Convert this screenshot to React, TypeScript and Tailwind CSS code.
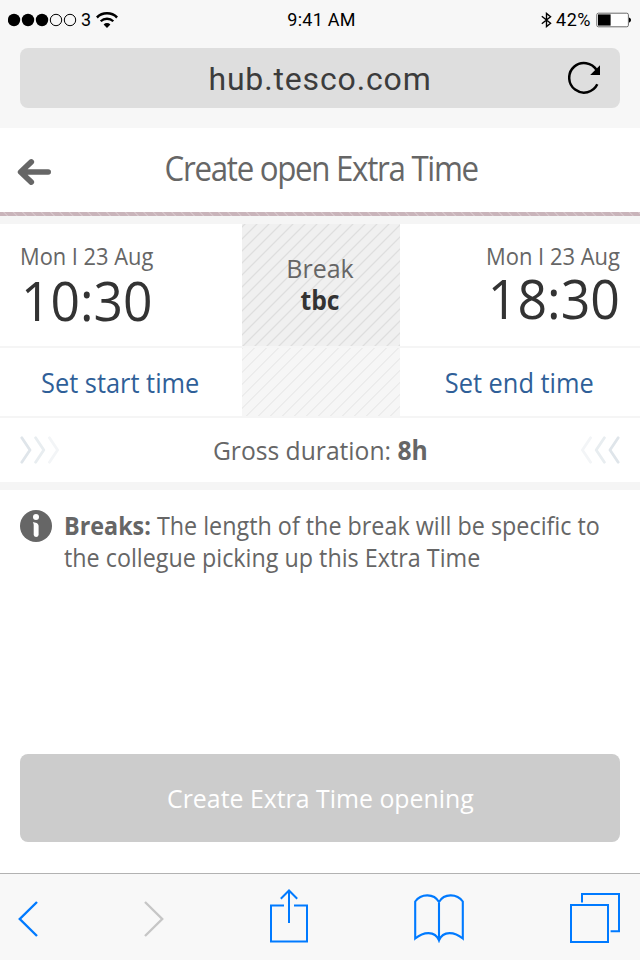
import type { ReactNode } from "react";

function StatusBar() {
  return (
    <div className="flex h-10 items-center justify-between pr-[9px] pl-2 font-['Roboto',sans-serif] text-[18px] leading-10 text-black">
      <div className="flex w-[274px] items-center">
        <svg width="70" height="14" viewBox="0 0 70 14">
          <circle cx="6" cy="7" r="6.2" />
          <circle cx="20" cy="7" r="6.2" />
          <circle cx="34" cy="7" r="6.2" />
          <circle cx="48" cy="7" r="5.7" fill="none" stroke="#000" />
          <circle cx="62" cy="7" r="5.7" fill="none" stroke="#000" />
        </svg>
        <span className="ml-[3px] w-[15px]">3</span>
        <svg width="22" height="16" viewBox="0 0 22 16" fill="none" stroke="#000">
          <path d="M.9 5.5a14.4 14.4 0 0 1 20.2 0" strokeWidth="2.5" />
          <path d="M4.7 9.3a9 9 0 0 1 12.6 0" strokeWidth="2.3" />
          <path d="M11 16 7.6 12.4a4.9 4.9 0 0 1 6.8 0Z" fill="#000" stroke="none" />
        </svg>
      </div>
      <span className="tracking-[0.25px]">9:41 AM</span>
      <div className="flex w-[270px] items-center justify-end">
        <svg width="11" height="16" viewBox="0 0 10 15" fill="none" stroke="#000" strokeWidth="1.3">
          <path d="M.6 4 8.8 10.6 5 13.7V1.3l3.8 3.1L.6 11" />
        </svg>
        <span className="ml-[4px] tracking-[0.5px]">42%</span>
        <svg className="ml-[5px]" width="35" height="16" viewBox="0 0 35 16">
          <rect x="0.8" y="1.2" width="31.6" height="13.6" rx="1.6" fill="#fff" stroke="#6b6b6b" strokeWidth="1" />
          <rect x="2" y="2.4" width="12.6" height="11.2" />
          <path d="M33 5.4c1.3.4 2 1.4 2 2.6s-.7 2.2-2 2.6Z" />
        </svg>
      </div>
    </div>
  );
}

function AddressBar() {
  return (
    <div className="mx-5 mt-2 flex h-[60px] items-center rounded-lg bg-[#dedede]">
      <span className="w-9" />
      <span className="flex-1 pt-[2px] pl-4 text-center font-['Roboto',sans-serif] text-[32px] leading-[60px] tracking-[0.85px] text-[#3c3c3c]">
        hub.tesco.com
      </span>
      <svg className="mr-4" width="36" height="36" viewBox="0 0 36 36">
        <path d="M28.7 10.2A14.8 14.8 0 1 0 29.3 24.3" fill="none" stroke="#000" strokeWidth="2.5" />
        <path d="M32 5.2V15h-9.8Z" />
      </svg>
    </div>
  );
}

function Chevrons({ flip = false }: { flip?: boolean }) {
  return (
    <svg className={flip ? "-scale-x-100" : ""} width="40" height="28" viewBox="0 0 40 28" fill="none" strokeWidth="2.8" strokeLinecap="round" strokeLinejoin="round">
      <path d="M1.8 1.8 10 14 1.8 26.2" stroke="#dfe5ea" />
      <path d="M15.6 1.8 23.8 14 15.6 26.2" stroke="#e8edf0" />
      <path d="M29.4 1.8 37.6 14 29.4 26.2" stroke="#f3f5f7" />
    </svg>
  );
}

function SetButton({ children }: { children: ReactNode }) {
  return (
    <button className="flex-1 pt-px pr-[2px] text-center text-[27px] leading-[66px] text-[#2f5f98]">
      <span className="inline-block scale-x-[0.94]">{children}</span>
    </button>
  );
}

export default function App() {
  return (
    <div className="flex h-[960px] w-[640px] flex-col overflow-hidden bg-white font-['Open_Sans','Noto_Sans',sans-serif] text-[#666]">
      <div className="h-32 bg-[#f7f7f7]">
        <StatusBar />
        <AddressBar />
      </div>

      <header className="flex h-[84px] items-center">
        <svg className="mt-[4px] ml-4" width="36" height="30" viewBox="0 0 36 30" fill="none" stroke="#666" strokeWidth="5.6" strokeLinecap="round" strokeLinejoin="round">
          <path d="M5 15H32.2M15.3 4.9 4.6 15l10.7 10.1" />
        </svg>
        <h1 className="mr-[50px] flex-1 pb-[4px] text-center text-[34px] leading-[44px] whitespace-nowrap">
          <span className="inline-block scale-x-[0.92] tracking-[-1.42px]">Create open Extra Time</span>
        </h1>
      </header>
      <div className="h-1 bg-[#c9b4ba] bg-[repeating-linear-gradient(45deg,transparent_0_4.6px,#d6c5ca_5.2px_5.8px,transparent_6.4px_6.6px)]" />
      <div className="h-2 bg-[#f5f5f5]" />

      <section className="flex h-[122px]">
        <div className="w-[242px] pt-[20px] pl-5">
          <div className="origin-left scale-x-[0.91] text-[24px] leading-6 whitespace-nowrap">Mon I 23 Aug</div>
          <div className="mt-[5px] ml-px origin-left scale-x-[0.955] text-[54px] leading-[54px] text-[#333]">10:30</div>
        </div>
        <div className="w-[158px] bg-[#f0f0f0] bg-[repeating-linear-gradient(135deg,transparent_0_1.1px,#dedede_1.8px_2.4px,transparent_3.1px_8.485px)] pt-[28px] pr-[2px] text-center text-[26px] leading-8">
          <div className="scale-x-[0.96]">Break</div>
          <div className="scale-x-[0.95] font-bold text-[#333]">tbc</div>
        </div>
        <div className="w-[240px] pt-[20px] pr-5 text-right">
          <div className="origin-right scale-x-[0.915] text-[24px] leading-6 whitespace-nowrap">Mon I 23 Aug</div>
          <div className="mt-[3px] origin-right scale-x-[0.96] text-[54px] leading-[54px] text-[#333]">18:30</div>
        </div>
      </section>

      <section className="flex h-[72px] border-y-2 border-[#f5f5f5]">
        <div className="flex w-[242px]"><SetButton>Set start time</SetButton></div>
        <div className="w-[158px] bg-[#f6f6f6] bg-[repeating-linear-gradient(135deg,#ebebeb_0_0.6px,transparent_1.2px_7.9px,#ebebeb_8.485px)]" />
        <div className="flex w-[240px]"><SetButton>Set end time</SetButton></div>
      </section>

      <section className="flex h-16 items-center justify-between px-5">
        <Chevrons />
        <p className="scale-x-[0.948] text-[26px] leading-8">
          Gross duration: <b>8h</b>
        </p>
        <Chevrons flip />
      </section>
      <div className="h-2 bg-[#f5f5f5]" />

      <section className="flex flex-1 pt-[19px] pl-5">
        <svg className="mt-px shrink-0" width="32" height="32" viewBox="0 0 32 32">
          <circle cx="16" cy="16" r="16" fill="#666" />
          <circle cx="16" cy="6.9" r="3" fill="#fff" />
          <path d="M12.8 12.3c2.4.2 5.8.7 5.8 3.7v9.1a2.5 2.5 0 0 1-4.9 0V15.5c0-1.5-.2-2.2-.9-3.2Z" fill="#fff" />
        </svg>
        <p className="ml-3 shrink-0 origin-left scale-x-[0.933] text-[25px] leading-8 whitespace-nowrap">
          <b>Breaks:</b> The length of the break will be specific to
          <br />
          the collegue picking up this Extra Time
        </p>
      </section>

      <button className="mx-5 mb-[31px] h-[88px] rounded-lg bg-[#ccc] pt-px text-[26px] leading-[87px] text-white">
        <span className="inline-block scale-x-[0.956]">Create Extra Time opening</span>
      </button>

      <footer className="flex h-[87px] items-center justify-between border-t border-[#b2b2b2] bg-[#f8f8f8] pr-5 pl-[18px]">
        <svg className="mt-[3px]" width="20" height="38" viewBox="0 0 20 38" fill="none" stroke="#007aff" strokeWidth="2.4">
          <path d="M19 2 1.8 19 19 36" />
        </svg>
        <svg className="mt-[3px]" width="20" height="38" viewBox="0 0 20 38" fill="none" stroke="#c6c6c6" strokeWidth="2.4">
          <path d="M1 2 18.2 19 1 36" />
        </svg>
        <svg className="-mt-[2px]" width="38" height="54" viewBox="0 0 38 54" fill="none" stroke="#007aff" strokeWidth="2">
          <path d="M14 16.4H1V52.4H37V16.4H24M19 34V2M10.8 9.7 19 1.5l8.2 8.2" />
        </svg>
        <svg className="mt-px" width="50" height="50" viewBox="0 0 50 50" fill="none" stroke="#007aff" strokeWidth="2.1">
          <path d="M25 10V47M25 9C20 .2 7 .2 1.2 8.5V45.500C9 39 21 37 25 47.500 29 37 41 39 48.800 45.500V8.500C43 .2 30 .2 25 9Z" />
        </svg>
        <svg className="mt-px" width="50" height="50" viewBox="0 0 50 50" fill="none" stroke="#007aff" strokeWidth="2">
          <path d="M1 12H38V49H1ZM12 9.500V1H49V38.200H40.600" />
        </svg>
      </footer>
    </div>
  );
}
